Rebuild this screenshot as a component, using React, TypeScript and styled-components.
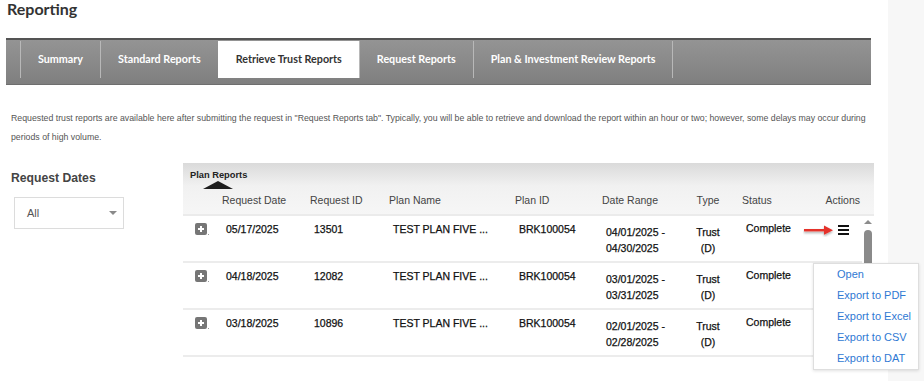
import React from 'react';
import styled, { createGlobalStyle } from 'styled-components';

const GlobalStyle = createGlobalStyle`
  html, body { margin: 0; padding: 0; background: #fff; }
  body { font-family: "Liberation Sans", Arial, sans-serif; }
  * { box-sizing: border-box; }
`;

const Page = styled.div`
  display: flex;
  width: 924px;
  height: 381px;
  overflow: hidden;
`;

const Main = styled.div`
  position: relative;
  width: 888px;
  padding-left: 6px;
`;

const Side = styled.div`
  flex: 1;
  background: #f7f7f7;
`;

const Title = styled.h1`
  margin: 0;
  height: 38px;
  padding: 0 0 0 1px;
  font-family: Lato, "Liberation Sans", sans-serif;
  font-weight: 700;
  font-size: 16px;
  line-height: 17px;
  color: #333;
`;

const TabBar = styled.div`
  display: flex;
  width: 865px;
  height: 47px;
  padding: 1px 0 6px 14px;
  border-top: 2px solid #545454;
  border-bottom: 1px solid #6e6e6e;
  background: linear-gradient(#949494, #7f7f7f);
`;

const Tab = styled.div<{ $active?: boolean; $last?: boolean }>`
  display: flex;
  align-items: center;
  padding: 0 17px 3px;
  border-left: 1px solid ${(p) => (p.$active ? '#fff' : '#b8b8b8')};
  border-right: ${(p) => (p.$last ? '1px solid #b8b8b8' : 'none')};
  background: ${(p) => (p.$active ? '#fff' : 'transparent')};
  color: ${(p) => (p.$active ? '#333' : '#fff')};
  font-family: Lato, "Liberation Sans", sans-serif;
  font-weight: 700;
  font-size: 10.75px;
  white-space: nowrap;
`;

const Intro = styled.p`
  margin: 24px 0 0 0;
  padding-left: 5px;
  width: 866px;
  font-size: 8.75px;
  line-height: 19px;
  color: #555;
`;

const Content = styled.div`
  display: flex;
  margin-top: 16px;
`;

const Filters = styled.div`
  width: 177px;
  padding-left: 5px;
`;

const FilterLabel = styled.div`
  margin-top: 7px;
  font-size: 12.2px;
  font-weight: 700;
  line-height: 16px;
  color: #444;
`;

const Select = styled.div`
  display: flex;
  align-items: center;
  justify-content: space-between;
  margin: 11px 0 0 3px;
  width: 110px;
  height: 32px;
  padding: 0 6px 0 12px;
  border: 1px solid #dcdcdc;
  font-size: 11px;
  color: #555;
`;

const Caret = styled.span`
  width: 0;
  height: 0;
  border-left: 4px solid transparent;
  border-right: 4px solid transparent;
  border-top: 4px solid #8a8a8a;
`;

const Panel = styled.div`
  width: 691px;
`;

const PanelHeader = styled.div`
  padding-top: 6px;
  background: linear-gradient(#dadada, #f1f1f1 45%, #f6f6f6);
  border-bottom: 2px solid #ebebeb;
`;

const Caption = styled.div`
  padding-left: 7px;
  font-size: 9.3px;
  font-weight: 700;
  line-height: 12px;
  color: #222;
`;

const Pointer = styled.div`
  margin-left: 20px;
  width: 0;
  height: 0;
  border-left: 15px solid transparent;
  border-right: 15px solid transparent;
  border-bottom: 8px solid #1e1e1e;
`;

const columns = '35px 88px 79px 126px 87px 86px 54px 62px 1fr';

const HeadRow = styled.div`
  display: grid;
  grid-template-columns: ${columns};
  margin-top: 4px;
  padding: 0 12px 7px 0;
  font-size: 10.5px;
  line-height: 14px;
  color: #444;
`;

const HeadCell = styled.div<{ $align?: 'left' | 'center' | 'right' }>`
  padding-left: ${(p) => (p.$align === 'left' || !p.$align ? '4px' : '0')};
  padding-right: ${(p) => (p.$align === 'center' ? '6px' : p.$align === 'right' ? '2px' : '0')};
  text-align: ${(p) => p.$align || 'left'};
  white-space: nowrap;
`;

const Body = styled.div`
  display: flex;
`;

const Rows = styled.div`
  flex: 1;
`;

const Row = styled.div`
  display: grid;
  grid-template-columns: ${columns};
  height: 47px;
  border-bottom: 2px solid #ececec;
  font-size: 10.5px;
  color: #111;
  -webkit-text-stroke: 0.25px #111;
`;

const Cell = styled.div<{ $top?: number; $center?: boolean }>`
  position: relative;
  padding: ${(p) => p.$top ?? 6}px ${(p) => (p.$center ? '6px' : '0')} 0 ${(p) => (p.$center ? '0' : '8px')};
  line-height: ${(p) => ((p.$top ?? 6) > 6 ? 16 : 14)}px;
  text-align: ${(p) => (p.$center ? 'center' : 'left')};
  white-space: nowrap;
`;

const ExpandCell = styled.div`
  display: flex;
  align-items: flex-start;
  padding: 7px 0 0 12px;
`;

const Expand = styled.span`
  position: relative;
  width: 12px;
  height: 12px;
  border-radius: 2px;
  background: #767676;
  &::before,
  &::after {
    content: '';
    position: absolute;
    background: #fff;
  }
  &::before {
    left: 3px;
    top: 5px;
    width: 6px;
    height: 2px;
  }
  &::after {
    left: 5px;
    top: 3px;
    width: 2px;
    height: 6px;
  }
`;

const Dot = styled.span`
  margin: 11px 0 0 1px;
  width: 1px;
  height: 1px;
  background: #9a9a9a;
`;

const ActionCell = styled.div`
  position: relative;
  display: flex;
  align-items: flex-start;
  gap: 3px;
  padding: 9px 0 0 3px;
  -webkit-text-stroke: 0;
`;

const Scrollbar = styled.div`
  display: flex;
  flex-direction: column;
  align-items: center;
  width: 12px;
  padding-top: 4px;
`;

const ScrollUp = styled.span`
  width: 0;
  height: 0;
  border-left: 4px solid transparent;
  border-right: 4px solid transparent;
  border-bottom: 4px solid #8c8c8c;
`;

const Thumb = styled.span`
  margin-top: 6px;
  width: 8px;
  height: 72px;
  border-radius: 4px;
  background: #8a8a8a;
`;

const Menu = styled.ul`
  position: absolute;
  left: 13px;
  top: 47px;
  z-index: 2;
  margin: 0;
  padding: 0;
  width: 106px;
  list-style: none;
  background: #fff;
  border: 1px solid #dedede;
  box-shadow: 0 1px 3px rgba(0, 0, 0, 0.12);
`;

const MenuItem = styled.li`
  padding-left: 23px;
  font-size: 11px;
  line-height: 21px;
  color: #2f79d3;
  white-space: nowrap;
`;

const RedArrow = () => (
  <svg width="32" height="14" viewBox="0 0 32 14" style={{ marginTop: -2 }}>
    <defs>
      <filter id="sh" x="-20%" y="-50%" width="140%" height="200%">
        <feDropShadow dx="0" dy="1.5" stdDeviation="1" floodColor="#000" floodOpacity="0.35" />
      </filter>
    </defs>
    <g filter="url(#sh)">
      <rect x="1" y="6" width="22" height="2.4" fill="#e5312b" />
      <polygon points="21,2.5 30,7.2 21,11.8" fill="#e5312b" />
    </g>
  </svg>
);

const Hamburger = () => (
  <svg width="11" height="10" viewBox="0 0 11 10">
    <rect x="0" y="0" width="11" height="2" fill="#111" />
    <rect x="0" y="4" width="11" height="2" fill="#111" />
    <rect x="0" y="8" width="11" height="2" fill="#111" />
  </svg>
);

type Report = {
  date: string;
  id: string;
  name: string;
  planId: string;
  from: string;
  to: string;
};

const reports: Report[] = [
  { date: '05/17/2025', id: '13501', name: 'TEST PLAN FIVE ...', planId: 'BRK100054', from: '04/01/2025', to: '04/30/2025' },
  { date: '04/18/2025', id: '12082', name: 'TEST PLAN FIVE ...', planId: 'BRK100054', from: '03/01/2025', to: '03/31/2025' },
  { date: '03/18/2025', id: '10896', name: 'TEST PLAN FIVE ...', planId: 'BRK100054', from: '02/01/2025', to: '02/28/2025' },
];

const tabs = ['Summary', 'Standard Reports', 'Retrieve Trust Reports', 'Request Reports', 'Plan & Investment Review Reports'];

export default function App() {
  return (
    <>
      <GlobalStyle />
      <Page>
        <Main>
          <Title>Reporting</Title>
          <TabBar>
            {tabs.map((t, i) => (
              <Tab key={t} $active={i === 2} $last={i === tabs.length - 1}>
                {t}
              </Tab>
            ))}
          </TabBar>
          <Intro>
            Requested trust reports are available here after submitting the request in "Request Reports tab". Typically, you will be able to retrieve and download the report within an hour or two; however, some delays may occur during periods of high volume.
          </Intro>
          <Content>
            <Filters>
              <FilterLabel>Request Dates</FilterLabel>
              <Select>
                <span>All</span>
                <Caret />
              </Select>
            </Filters>
            <Panel>
              <PanelHeader>
                <Caption>Plan Reports</Caption>
                <Pointer />
                <HeadRow>
                  <HeadCell />
                  <HeadCell>Request Date</HeadCell>
                  <HeadCell>Request ID</HeadCell>
                  <HeadCell>Plan Name</HeadCell>
                  <HeadCell>Plan ID</HeadCell>
                  <HeadCell>Date Range</HeadCell>
                  <HeadCell $align="center">Type</HeadCell>
                  <HeadCell>Status</HeadCell>
                  <HeadCell $align="right">Actions</HeadCell>
                </HeadRow>
              </PanelHeader>
              <Body>
                <Rows>
                  {reports.map((r, i) => (
                    <Row key={r.id}>
                      <ExpandCell>
                        <Expand />
                        <Dot />
                      </ExpandCell>
                      <Cell>{r.date}</Cell>
                      <Cell>{r.id}</Cell>
                      <Cell>{r.name}</Cell>
                      <Cell>{r.planId}</Cell>
                      <Cell $top={8}>
                        {r.from} -<br />
                        {r.to}
                      </Cell>
                      <Cell $top={8} $center>
                        Trust<br />(D)
                      </Cell>
                      <Cell $top={5}>Complete</Cell>
                      {i === 0 ? (
                        <ActionCell>
                          <RedArrow />
                          <Hamburger />
                          <Menu>
                            <MenuItem>Open</MenuItem>
                            <MenuItem>Export to PDF</MenuItem>
                            <MenuItem>Export to Excel</MenuItem>
                            <MenuItem>Export to CSV</MenuItem>
                            <MenuItem>Export to DAT</MenuItem>
                          </Menu>
                        </ActionCell>
                      ) : (
                        <ActionCell />
                      )}
                    </Row>
                  ))}
                </Rows>
                <Scrollbar>
                  <ScrollUp />
                  <Thumb />
                </Scrollbar>
              </Body>
            </Panel>
          </Content>
        </Main>
        <Side />
      </Page>
    </>
  );
}
